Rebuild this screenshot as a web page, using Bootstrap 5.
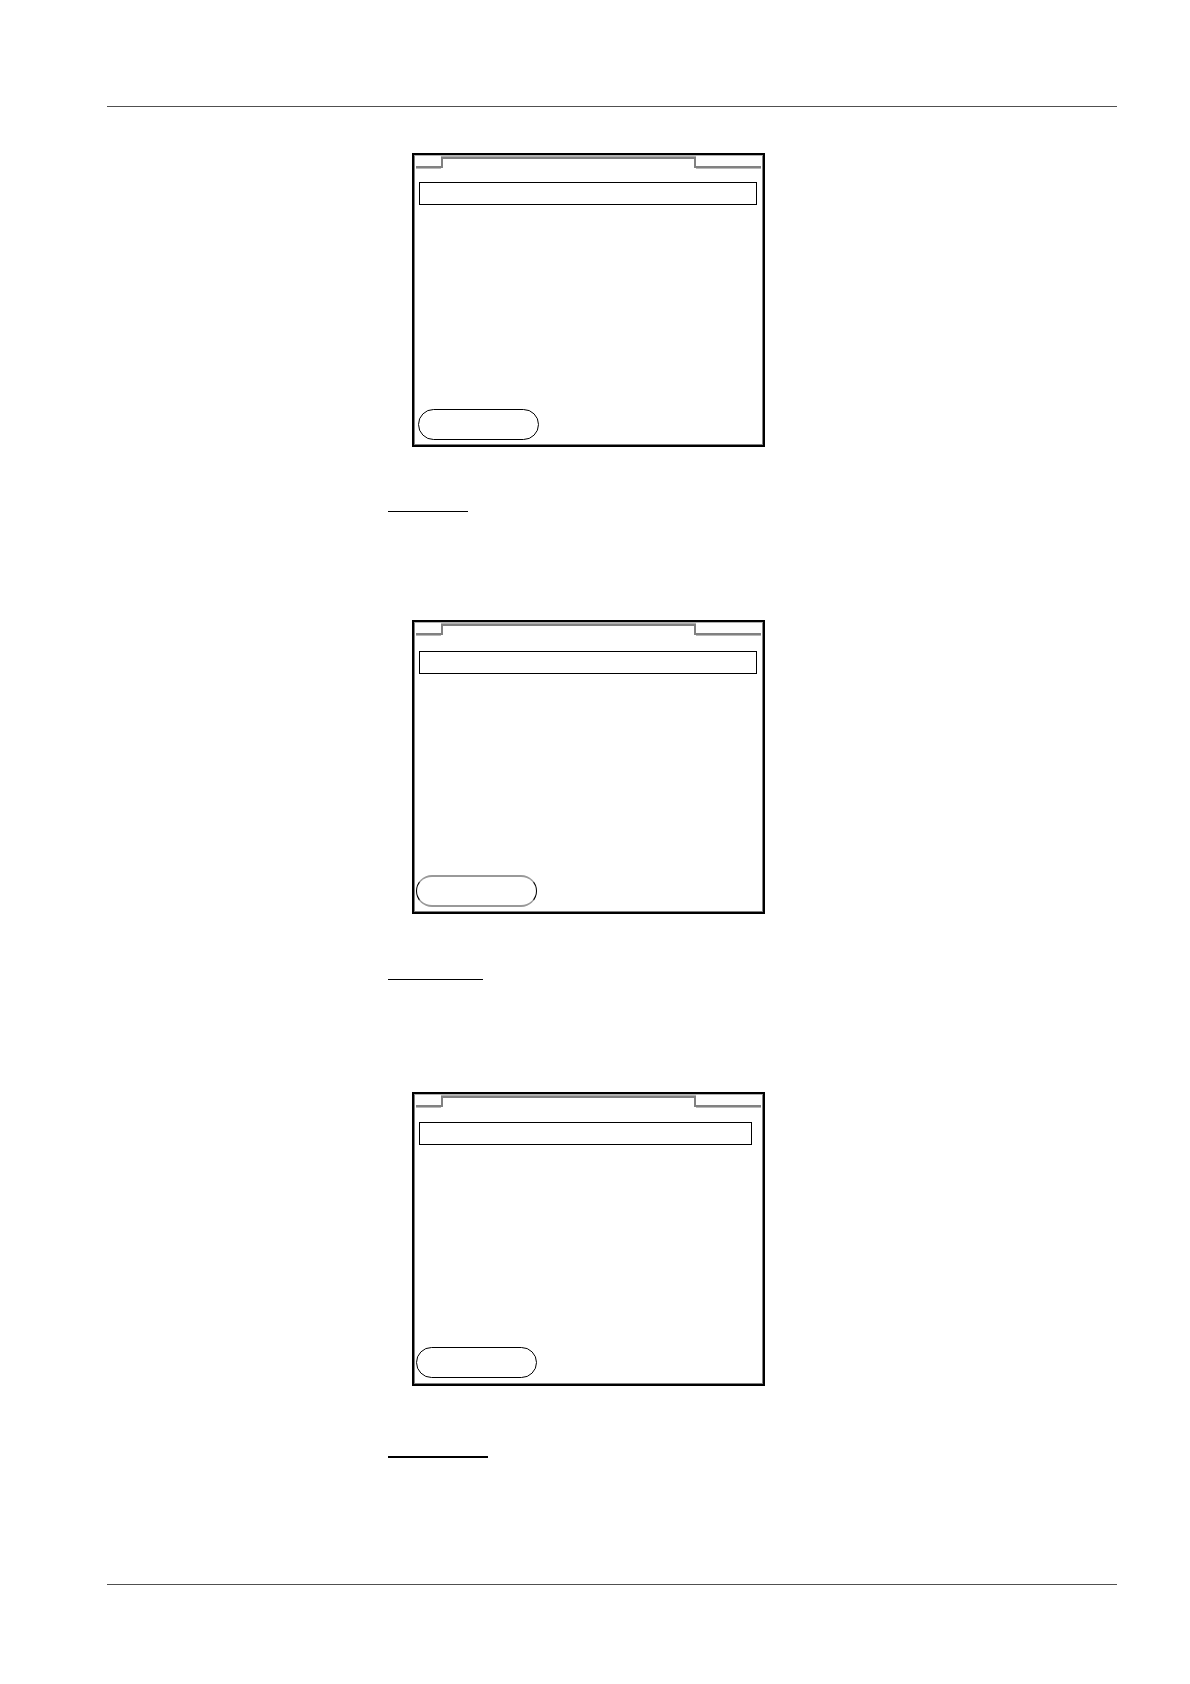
<!DOCTYPE html>
<html lang="en">
<head>
<meta charset="utf-8">
<meta name="viewport" content="width=device-width, initial-scale=1">
<title>Display screens</title>
<link href="https://cdn.jsdelivr.net/npm/bootstrap@5.3.0/dist/css/bootstrap.min.css" rel="stylesheet">
<style>
  body { background: #fff; font-family: "Liberation Sans", Arial, sans-serif; }
  .sheet { padding: 106px 73px 99px 107px; }
  .page-rule { height: 1px; background: #505050; }
  .margin-col { flex: 0 0 281px; }
  .content-col { padding: 46px 0 126px; }

  .screen { width: 100%; max-width: 353px; height: 294px; margin-left: 24px; border: 2px solid #000; }
  .screen-face { border: 1px solid #808080; border-top-color: #b0b0b0; padding: 0 1px; }

  /* Raised tab between two stretches of baseline */
  .tab-strip { height: 12px; }
  .tab-side { border-bottom: 2px solid #808080; background: #fdfdfd; box-shadow: 0 1px 0 #b8b8b8; }
  .tab-left { flex: 0 0 25px; }
  .tab-right { flex: 0 0 65px; }
  .tab-top { height: 11px; margin-top: 1px; border: 2px solid #808080; border-bottom: 0; box-shadow: 0 -1px 0 #b0b0b0; }

  .entry { width: 338px; height: 23px; margin: 14px 0 0 3px; padding: 0 4px; border: 1px solid #000; background: #fff; }
  .entry-low { margin-top: 16px; }
  .entry-mid { margin-top: 15px; width: 333px; }

  .pill { width: 121px; height: 31px; border: 1px solid #000; border-radius: 16px; background: #fff; margin-bottom: 4px; }
  .pill-inset { margin-left: 2px; }
  .pill-soft { height: 32px; border-top: 2px solid #999; border-bottom: 2px solid #999; }
  .pill-raised { margin-bottom: 5px; }

  .underline { height: 1px; background: #000; }
  .line-a { width: 80px; margin: 64px 0 108px; }
  .line-b { width: 95px; margin: 65px 0 112px; }
  .line-c { width: 100px; height: 2px; margin-top: 70px; }
</style>
</head>
<body>
<div class="sheet">
  <header class="page-rule"></header>
  <div class="d-flex">
    <aside class="margin-col"></aside>
    <main class="content-col flex-fill">
      <section class="screen">
        <div class="screen-face h-100 d-flex flex-column align-items-start">
          <div class="tab-strip d-flex w-100">
            <div class="tab-side tab-left"></div>
            <div class="tab-top flex-fill"></div>
            <div class="tab-side tab-right"></div>
          </div>
          <input class="entry" type="text" aria-label="Title">
          <button class="pill pill-inset mt-auto" type="button" aria-label="Select"></button>
        </div>
      </section>
      <div class="underline line-a"></div>

      <section class="screen">
        <div class="screen-face h-100 d-flex flex-column align-items-start">
          <div class="tab-strip d-flex w-100">
            <div class="tab-side tab-left"></div>
            <div class="tab-top flex-fill"></div>
            <div class="tab-side tab-right"></div>
          </div>
          <input class="entry entry-low" type="text" aria-label="Title">
          <button class="pill pill-soft mt-auto" type="button" aria-label="Select"></button>
        </div>
      </section>
      <div class="underline line-b"></div>

      <section class="screen">
        <div class="screen-face h-100 d-flex flex-column align-items-start">
          <div class="tab-strip d-flex w-100">
            <div class="tab-side tab-left"></div>
            <div class="tab-top flex-fill"></div>
            <div class="tab-side tab-right"></div>
          </div>
          <input class="entry entry-mid" type="text" aria-label="Title">
          <button class="pill pill-raised mt-auto" type="button" aria-label="Select"></button>
        </div>
      </section>
      <div class="underline line-c"></div>
    </main>
  </div>
  <footer class="page-rule"></footer>
</div>
<script src="https://cdn.jsdelivr.net/npm/bootstrap@5.3.0/dist/js/bootstrap.bundle.min.js"></script>
</body>
</html>
